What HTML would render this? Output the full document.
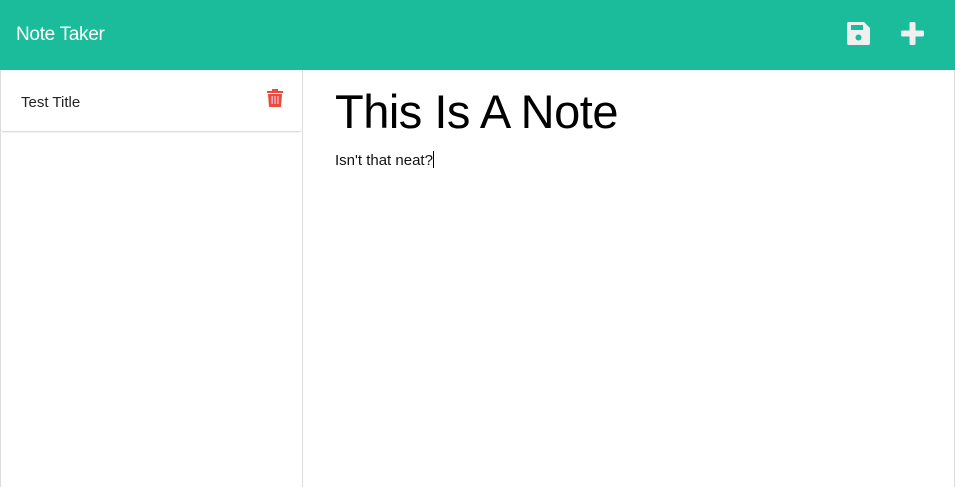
<!DOCTYPE html>
<html><head><style>
body{margin:0;width:955px;height:487px;overflow:hidden;background:#fff;font-family:"Liberation Sans",sans-serif;}
.nav{height:70px;background:#1abc9c;position:relative;}
.nav .t{position:absolute;left:16px;top:24px;color:#fff;font-size:19px;letter-spacing:-0.3px;}
.side{position:absolute;left:0;top:70px;width:303px;height:417px;border-left:1px solid #ddd;border-right:1px solid #ddd;box-sizing:border-box;}
.item{height:61px;border-bottom:1px solid #ddd;position:relative;box-shadow:0 1px 1px rgba(0,0,0,.05);border-radius:0 0 3px 3px;}
.item span{position:absolute;left:20px;top:24px;font-size:15px;color:#222;}
.main{position:absolute;left:335px;top:84px;}
h1{margin:0;font-weight:normal;font-size:47px;color:#000;letter-spacing:-0.5px;}
p{margin:12px 0 0;font-size:15px;color:#111;}
.rb{position:absolute;right:0;top:70px;width:1px;height:417px;background:#ddd;}
</style></head><body>
<div class="nav"><div class="t">Note Taker</div>
<svg style="position:absolute;left:847px;top:22px" width="23" height="23" viewBox="0 0 23 23"><path d="M2 0h15l6 6v15a2 2 0 0 1-2 2H2a2 2 0 0 1-2-2V2a2 2 0 0 1 2-2z" fill="#f0f0f0"/><rect x="4" y="3" width="12" height="5" fill="#1abc9c"/><circle cx="11.5" cy="15.5" r="3" fill="#1abc9c"/></svg>
<svg style="position:absolute;left:901px;top:22px" width="23" height="23" viewBox="0 0 23 23"><rect x="8.5" y="0" width="6" height="23" rx="1.5" fill="#f0f0f0"/><rect x="0" y="8.5" width="23" height="6" rx="1.5" fill="#f0f0f0"/></svg>
</div>
<div class="side"><div class="item"><span>Test Title</span>
<svg style="position:absolute;left:266px;top:19px" width="16" height="18" viewBox="0 0 16 18"><rect x="0" y="2" width="16" height="2" fill="#e74c3c"/><rect x="5" y="0" width="6" height="2" fill="#e74c3c"/><path d="M1 5h14l-1 13H2z" fill="#e74c3c"/><rect x="4.5" y="7" width="1.3" height="8" fill="#fbd"/><rect x="7.4" y="7" width="1.3" height="8" fill="#fbd"/><rect x="10.3" y="7" width="1.3" height="8" fill="#fbd"/></svg>
</div></div>
<div class="rb"></div>
<div class="main"><h1>This Is A Note</h1><p>Isn't that neat?<span style="display:inline-block;width:1px;height:17px;background:#000;vertical-align:-3px"></span></p></div>
</body></html>
